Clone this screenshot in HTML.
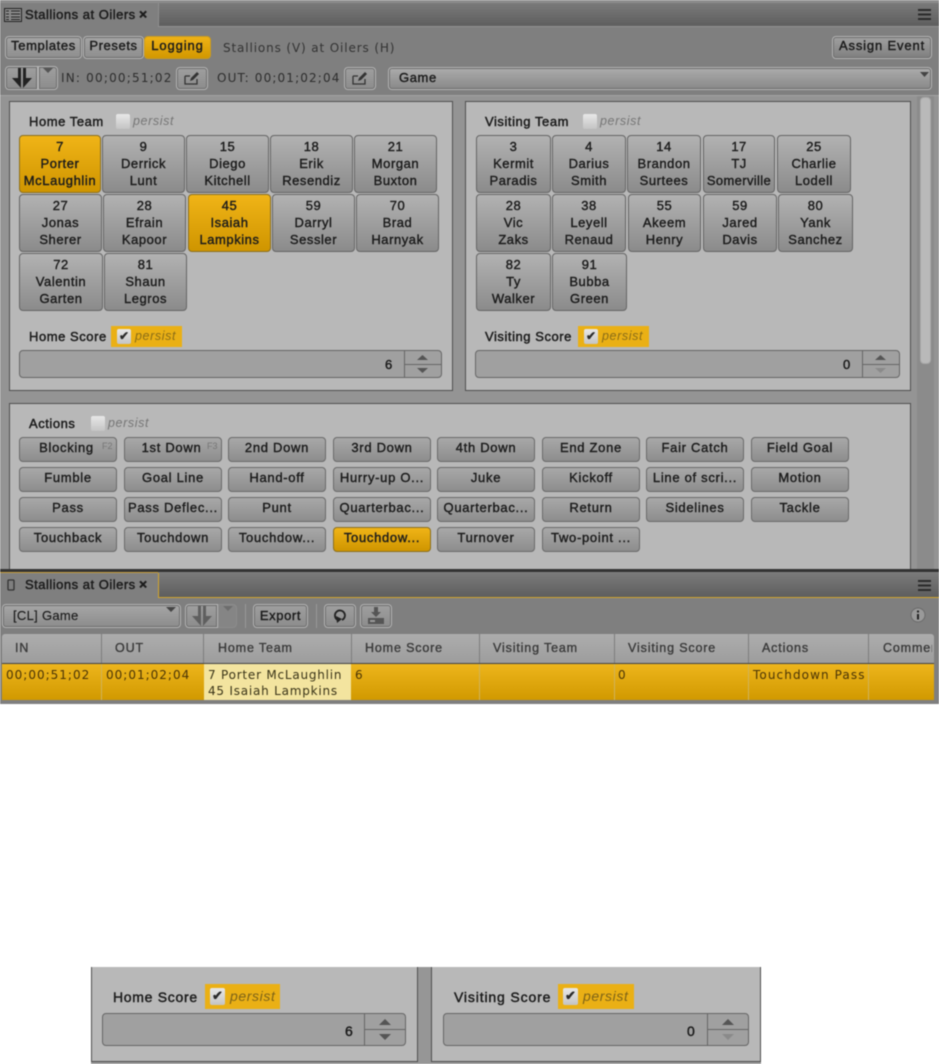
<!DOCTYPE html>
<html><head><meta charset="utf-8"><style>
html,body{margin:0;padding:0;background:#fff}
#p{position:relative;width:939px;height:1064px;overflow:hidden;background:#fff;filter:blur(.5px);font-family:"Liberation Sans",sans-serif;color:#1c1c1c;font-size:13px}
#p div,#p svg,#p span.a{position:absolute;box-sizing:border-box}
.b{background:linear-gradient(#b2b2b2,#8b8b8b);border:1px solid #656565;border-radius:4px;text-align:center;letter-spacing:.55px;line-height:17px;padding-top:2px;white-space:nowrap;-webkit-text-stroke:.4px #1c1c1c}
.c{background:linear-gradient(#a8a8a8,#8d8d8d);border:1px solid #6a6a6a;border-radius:4px;text-align:center;letter-spacing:.7px;line-height:20px;height:25px;width:98px;white-space:nowrap;-webkit-text-stroke:.4px #1c1c1c}
.b.g,.c.g{background:linear-gradient(#f0b417,#cf9500);border-color:#8b6f20}
.t{background:linear-gradient(#9f9f9f,#8c8c8c);border:1px solid #b5b5b5;outline:1px solid #6d6d6d;outline-offset:-2px;border-radius:4px;text-align:center;white-space:nowrap;letter-spacing:.6px;-webkit-text-stroke:.4px #1c1c1c}
.pn{background:#b8b8b8;border:1px solid #4f4f4f}
.l{white-space:nowrap;letter-spacing:.55px;font-size:13px;-webkit-text-stroke:.45px #1c1c1c}
.d{font-family:"DejaVu Sans",sans-serif;font-size:12px;white-space:nowrap;color:#2d2d2d;letter-spacing:1.2px}
.cb{width:14px;height:15px;background:linear-gradient(#e8e8e8,#c4c4c4);border-radius:2px}
.pe{font-style:italic;color:#767676;font-size:12.5px;white-space:nowrap;letter-spacing:.6px}
.gb{background:#eab015}
.spin{background:#a0a0a0;border:1px solid #666;border-radius:4px}
.sd{background:#666;width:1px}
.h{font-family:"Liberation Sans",sans-serif;font-size:12.5px;color:#3a3a3a;white-space:nowrap;letter-spacing:.85px;-webkit-text-stroke:.35px #3a3a3a;top:641px}
.hs{background:#7d7d7d;width:1px;top:634px;height:29px}
.rs{background:#d0b35a;width:1px;top:664px;height:36px}
.ck{font-size:12px;color:#2a2a2a;font-weight:bold;white-space:nowrap}
</style></head><body><div id="p">

<div style="left:0;top:0;width:939px;height:570px;background:#7f7f7f"></div>
<div style="left:0;top:0;width:939px;height:3px;background:#8c8c8c"></div>
<div style="left:158px;top:3px;width:781px;height:24px;background:linear-gradient(#7a7a7a,#5e5e5e);border-bottom:1px solid #929292;border-left:1px solid #8f8f8f"></div>
<div style="left:0;top:3px;width:158px;height:25px;background:#7f7f7f"></div>
<svg style="left:4px;top:8px" width="18" height="14" viewBox="0 0 18 14"><rect x=".5" y=".5" width="17" height="13" fill="#8a8a8a" stroke="#222"/><path d="M2 3h3M2 6h3M2 9h3M2 11.5h3M7 3h9M7 6h9M7 9h9M7 11.5h9" stroke="#222" fill="none"/></svg>
<div class="l" style="left:25px;top:7px;letter-spacing:.5px">Stallions at Oilers</div>
<div class="l" style="left:139px;top:6px;font-size:14px;font-weight:bold">×</div>
<svg style="left:917px;top:8px" width="15" height="13" viewBox="0 0 15 13"><path d="M1 2h13M1 6.500h13M1 11h13" stroke="#2b2b2b" stroke-width="2"/></svg>

<div class="t" style="left:5px;top:36px;width:77px;height:23px;line-height:18px;background:linear-gradient(#a4a4a4,#8e8e8e)">Templates</div>
<div class="t" style="left:83px;top:36px;width:61px;height:23px;line-height:18px;background:linear-gradient(#a4a4a4,#8e8e8e)">Presets</div>
<div class="t" style="left:144px;top:36px;width:67px;height:23px;line-height:18px;letter-spacing:.9px;background:linear-gradient(#efb215,#d29800);border-color:#c99b20;outline:none">Logging</div>
<div class="d" style="left:223px;top:41px;color:#333;letter-spacing:.87px">Stallions (V) at Oilers (H)</div>
<div class="t" style="left:832px;top:36px;width:100px;height:23px;line-height:18px;letter-spacing:.85px;background:linear-gradient(#a0a0a0,#7f7f7f)">Assign Event</div>

<div class="t" style="left:5px;top:66px;width:33px;height:24px;border-radius:4px 0 0 4px"></div>
<div class="t" style="left:38px;top:66px;width:20px;height:24px;border-radius:0 4px 4px 0"></div>
<svg style="left:11px;top:68px" width="22" height="20" viewBox="0 0 22 20"><path d="M7 0h3v20L1 10h6zM12 0h3v10h6L12 20z" fill="#222"/></svg>
<svg style="left:43px;top:68px" width="10" height="6" viewBox="0 0 10 6"><path d="M0 0h10L5 5z" fill="#555"/></svg>
<div class="d" style="left:61px;top:71px">IN: 00;00;51;02</div>
<div class="t" style="left:176px;top:67px;width:32px;height:23px"></div>
<svg style="left:184px;top:71px" width="16" height="14" viewBox="0 0 16 14"><path d="M1 5v8h12V8M1 5h5" fill="none" stroke="#333" stroke-width="1.300"/><path d="M6 10l1-3 6-6 2 2-6 6z" fill="#333"/></svg>
<div class="d" style="left:217px;top:71px;letter-spacing:1.14px">OUT: 00;01;02;04</div>
<div class="t" style="left:344px;top:67px;width:32px;height:23px"></div>
<svg style="left:352px;top:71px" width="16" height="14" viewBox="0 0 16 14"><path d="M1 5v8h12V8M1 5h5" fill="none" stroke="#333" stroke-width="1.300"/><path d="M6 10l1-3 6-6 2 2-6 6z" fill="#333"/></svg>
<div class="t" style="left:388px;top:67px;width:544px;height:23px;background:linear-gradient(#acacac,#888);text-align:left;padding-left:10px;line-height:20px">Game</div>
<svg style="left:920px;top:72px" width="9" height="6" viewBox="0 0 9 6"><path d="M0 0h9L4.500 5z" fill="#444"/></svg>

<div style="left:0;top:95px;width:939px;height:475px;background:#949494;border-top:1px solid #a3a3a3"></div>
<div style="left:917px;top:96px;width:17px;height:474px;background:#8b8b8b"></div>
<div style="left:920px;top:97px;width:11px;height:267px;background:#b9b9b9;border-radius:4px;border:1px solid #a8a8a8"></div>

<div class="pn" style="left:9px;top:101px;width:444px;height:290px"></div>
<div class="pn" style="left:465px;top:101px;width:446px;height:290px"></div>

<div class="l" style="left:29px;top:114px">Home Team</div>
<div class="cb" style="left:116px;top:114px"></div>
<div class="pe" style="left:133px;top:114px">persist</div>
<div class="l" style="left:485px;top:114px">Visiting Team</div>
<div class="cb" style="left:583px;top:114px"></div>
<div class="pe" style="left:600px;top:114px">persist</div>

<div class="b g" style="left:19px;top:135px;width:82px;height:58px;letter-spacing:.6px">7<br>Porter<br>McLaughlin</div>
<div class="b" style="left:102px;top:135px;width:83px;height:58px">9<br>Derrick<br>Lunt</div>
<div class="b" style="left:186px;top:135px;width:83px;height:58px">15<br>Diego<br>Kitchell</div>
<div class="b" style="left:270px;top:135px;width:83px;height:58px">18<br>Erik<br>Resendiz</div>
<div class="b" style="left:354px;top:135px;width:83px;height:58px">21<br>Morgan<br>Buxton</div>
<div class="b" style="left:19px;top:194px;width:83px;height:58px">27<br>Jonas<br>Sherer</div>
<div class="b" style="left:103px;top:194px;width:83px;height:58px">28<br>Efrain<br>Kapoor</div>
<div class="b g" style="left:188px;top:194px;width:83px;height:58px">45<br>Isaiah<br>Lampkins</div>
<div class="b" style="left:272px;top:194px;width:83px;height:58px">59<br>Darryl<br>Sessler</div>
<div class="b" style="left:356px;top:194px;width:83px;height:58px">70<br>Brad<br>Harnyak</div>
<div class="b" style="left:19px;top:253px;width:84px;height:58px">72<br>Valentin<br>Garten</div>
<div class="b" style="left:104px;top:253px;width:83px;height:58px">81<br>Shaun<br>Legros</div>

<div class="b" style="left:476px;top:135px;width:75px;height:58px">3<br>Kermit<br>Paradis</div>
<div class="b" style="left:552px;top:135px;width:74px;height:58px">4<br>Darius<br>Smith</div>
<div class="b" style="left:627px;top:135px;width:74px;height:58px">14<br>Brandon<br>Surtees</div>
<div class="b" style="left:703px;top:135px;width:72px;height:58px;letter-spacing:.35px">17<br>TJ<br>Somerville</div>
<div class="b" style="left:777px;top:135px;width:74px;height:58px">25<br>Charlie<br>Lodell</div>
<div class="b" style="left:476px;top:194px;width:75px;height:58px">28<br>Vic<br>Zaks</div>
<div class="b" style="left:552px;top:194px;width:74px;height:58px">38<br>Leyell<br>Renaud</div>
<div class="b" style="left:628px;top:194px;width:73px;height:58px">55<br>Akeem<br>Henry</div>
<div class="b" style="left:703px;top:194px;width:74px;height:58px">59<br>Jared<br>Davis</div>
<div class="b" style="left:778px;top:194px;width:75px;height:58px">80<br>Yank<br>Sanchez</div>
<div class="b" style="left:476px;top:253px;width:75px;height:58px">82<br>Ty<br>Walker</div>
<div class="b" style="left:552px;top:253px;width:75px;height:58px">91<br>Bubba<br>Green</div>

<div class="l" style="left:29px;top:329px">Home Score</div>
<div class="gb" style="left:111px;top:326px;width:71px;height:21px"></div>
<div class="cb" style="left:117px;top:329px"></div>
<div class="ck" style="left:119px;top:329px">✔</div>
<div class="pe" style="left:135px;top:329px;color:#8a6d18">persist</div>
<div class="spin" style="left:19px;top:350px;width:423px;height:28px"></div>
<div class="sd" style="left:404px;top:351px;height:26px"></div>
<div class="sd" style="left:405px;top:364px;height:1px;width:36px"></div>
<div class="l" style="left:385px;top:357px">6</div>
<svg style="left:417px;top:355px" width="11" height="6"><path d="M0 5h11L5.500 0z" fill="#555"/></svg>
<svg style="left:417px;top:368px" width="11" height="6"><path d="M0 0h11L5.500 5z" fill="#555"/></svg>

<div class="l" style="left:485px;top:329px">Visiting Score</div>
<div class="gb" style="left:578px;top:326px;width:71px;height:21px"></div>
<div class="cb" style="left:584px;top:329px"></div>
<div class="ck" style="left:586px;top:329px">✔</div>
<div class="pe" style="left:602px;top:329px;color:#8a6d18">persist</div>
<div class="spin" style="left:475px;top:350px;width:425px;height:28px"></div>
<div class="sd" style="left:862px;top:351px;height:26px"></div>
<div class="sd" style="left:863px;top:364px;height:1px;width:36px"></div>
<div class="l" style="left:843px;top:357px">0</div>
<svg style="left:875px;top:355px" width="11" height="6"><path d="M0 5h11L5.500 0z" fill="#555"/></svg>
<svg style="left:875px;top:368px" width="11" height="6"><path d="M0 0h11L5.500 5z" fill="#8a8a8a"/></svg>

<div class="pn" style="left:9px;top:403px;width:902px;height:170px"></div>
<div class="l" style="left:29px;top:416px">Actions</div>
<div class="cb" style="left:91px;top:416px"></div>
<div class="pe" style="left:108px;top:416px">persist</div>

<div class="c" style="left:19px;top:437px;padding-right:3px">Blocking</div>
<div class="pe" style="left:102px;top:441px;font-size:9px;font-style:normal;letter-spacing:0">F2</div>
<div class="c" style="left:124px;top:437px;padding-right:3px">1st Down</div>
<div class="pe" style="left:207px;top:441px;font-size:9px;font-style:normal;letter-spacing:0">F3</div>
<div class="c" style="left:228px;top:437px">2nd Down</div>
<div class="c" style="left:333px;top:437px">3rd Down</div>
<div class="c" style="left:437px;top:437px">4th Down</div>
<div class="c" style="left:542px;top:437px">End Zone</div>
<div class="c" style="left:646px;top:437px">Fair Catch</div>
<div class="c" style="left:751px;top:437px">Field Goal</div>

<div class="c" style="left:19px;top:467px">Fumble</div>
<div class="c" style="left:124px;top:467px">Goal Line</div>
<div class="c" style="left:228px;top:467px">Hand-off</div>
<div class="c" style="left:333px;top:467px">Hurry-up O...</div>
<div class="c" style="left:437px;top:467px">Juke</div>
<div class="c" style="left:542px;top:467px">Kickoff</div>
<div class="c" style="left:646px;top:467px">Line of scri...</div>
<div class="c" style="left:751px;top:467px">Motion</div>

<div class="c" style="left:19px;top:497px">Pass</div>
<div class="c" style="left:124px;top:497px">Pass Deflec...</div>
<div class="c" style="left:228px;top:497px">Punt</div>
<div class="c" style="left:333px;top:497px">Quarterbac...</div>
<div class="c" style="left:437px;top:497px">Quarterbac...</div>
<div class="c" style="left:542px;top:497px">Return</div>
<div class="c" style="left:646px;top:497px">Sidelines</div>
<div class="c" style="left:751px;top:497px">Tackle</div>

<div class="c" style="left:19px;top:527px">Touchback</div>
<div class="c" style="left:124px;top:527px">Touchdown</div>
<div class="c" style="left:228px;top:527px">Touchdow...</div>
<div class="c g" style="left:333px;top:527px">Touchdow...</div>
<div class="c" style="left:437px;top:527px">Turnover</div>
<div class="c" style="left:542px;top:527px">Two-point ...</div>

<div style="left:0;top:569px;width:939px;height:3px;background:#333"></div>
<div style="left:0;top:572px;width:939px;height:132px;background:#7f7f7f"></div>
<div style="left:158px;top:573px;width:781px;height:25px;background:linear-gradient(#7a7a7a,#5e5e5e);border-bottom:1px solid #d3a52c;border-left:1px solid #d3a52c"></div>
<div style="left:0;top:572px;width:158px;height:27px;border-top:1px solid #c9a040;background:#7f7f7f"></div>
<svg style="left:7px;top:579px" width="8" height="12"><rect x="1" y="1" width="6" height="10" rx="1" fill="none" stroke="#333" stroke-width="1.300"/></svg>
<div class="l" style="left:25px;top:577px;letter-spacing:.5px">Stallions at Oilers</div>
<div class="l" style="left:139px;top:576px;font-size:14px;font-weight:bold">×</div>
<svg style="left:917px;top:579px" width="15" height="13" viewBox="0 0 15 13"><path d="M1 2h13M1 6.500h13M1 11h13" stroke="#2b2b2b" stroke-width="2"/></svg>

<div class="t" style="left:2px;top:604px;width:179px;height:24px;text-align:left;padding-left:10px;line-height:21px;letter-spacing:.3px;-webkit-text-stroke:.15px #222;background:linear-gradient(#a6a6a6,#8c8c8c)">[CL] Game</div>
<svg style="left:166px;top:607px" width="10" height="6"><path d="M0 0h10L5 5z" fill="#444"/></svg>
<div class="t" style="left:185px;top:604px;width:33px;height:24px;border-radius:4px 0 0 4px"></div>
<div class="t" style="left:218px;top:604px;width:19px;height:24px;border-radius:0 4px 4px 0;background:#858585;border-color:#8c8c8c;outline:none"></div>
<svg style="left:191px;top:606px" width="22" height="20" viewBox="0 0 22 20"><path d="M7 0h3v20L1 10h6zM12 0h3v10h6L12 20z" fill="#5f5f5f"/></svg>
<svg style="left:223px;top:606px" width="10" height="6"><path d="M0 0h10L5 5z" fill="#6d6d6d"/></svg>
<div style="left:245px;top:604px;width:1px;height:24px;background:#999"></div>
<div class="t" style="left:253px;top:604px;width:55px;height:24px;line-height:21px">Export</div>
<div style="left:316px;top:604px;width:1px;height:24px;background:#999"></div>
<div class="t" style="left:324px;top:604px;width:32px;height:24px"></div>
<svg style="left:332px;top:607px" width="16" height="18" viewBox="0 0 16 18"><path d="M5 12.500a5 5 0 1 1 5 .5" fill="none" stroke="#222" stroke-width="1.800"/><path d="M4 9l1 7 5-4z" fill="#222"/></svg>
<div class="t" style="left:360px;top:604px;width:32px;height:24px"></div>
<svg style="left:367px;top:607px" width="18" height="18" viewBox="0 0 18 18"><path d="M7 0h4v5h3l-5 5-5-5h3z" fill="#555"/><rect x="1" y="11" width="16" height="6" fill="#555"/><rect x="3" y="13" width="5" height="2" fill="#9a9a9a"/></svg>
<svg style="left:910px;top:607px" width="16" height="16" viewBox="0 0 16 16"><circle cx="8" cy="8" r="7" fill="#9a9a9a" stroke="#6a6a6a"/><path d="M8 3.500v2M8 7v5.500" stroke="#222" stroke-width="2"/></svg>

<div style="left:2px;top:634px;width:932px;height:30px;background:linear-gradient(#adadad,#9d9d9d);border-bottom:1px solid #444;border-radius:3px 3px 0 0"></div>
<div class="hs" style="left:101px"></div><div class="hs" style="left:203px"></div><div class="hs" style="left:351px"></div><div class="hs" style="left:479px"></div><div class="hs" style="left:614px"></div><div class="hs" style="left:748px"></div><div class="hs" style="left:868px"></div>
<div class="h" style="left:15px">IN</div>
<div class="h" style="left:115px">OUT</div>
<div class="h" style="left:218px">Home Team</div>
<div class="h" style="left:365px">Home Score</div>
<div class="h" style="left:493px">Visiting Team</div>
<div class="h" style="left:628px">Visiting Score</div>
<div class="h" style="left:762px">Actions</div>
<div class="h" style="left:883px;width:49px;overflow:hidden">Comments</div>

<div style="left:2px;top:664px;width:932px;height:36px;background:linear-gradient(#edb51c,#d19900)"></div>
<div style="left:204px;top:664px;width:147px;height:36px;background:#f3e49f"></div>
<div class="rs" style="left:101px"></div><div class="rs" style="left:479px"></div><div class="rs" style="left:614px"></div><div class="rs" style="left:748px"></div><div class="rs" style="left:868px"></div>
<div class="d" style="left:6px;top:668px;color:#4a3406;letter-spacing:1px">00;00;51;02</div>
<div class="d" style="left:106px;top:668px;color:#4a3406;letter-spacing:1px">00;01;02;04</div>
<div class="d" style="left:208px;top:668px;color:#3a3418;letter-spacing:.78px">7 Porter McLaughlin</div>
<div class="d" style="left:208px;top:684px;color:#3a3418;letter-spacing:.78px">45 Isaiah Lampkins</div>
<div class="d" style="left:355px;top:668px;color:#4a3406">6</div>
<div class="d" style="left:618px;top:668px;color:#4a3406">0</div>
<div class="d" style="left:753px;top:668px;color:#4a3406;letter-spacing:1.1px">Touchdown Pass</div>

<div class="pn" style="left:91px;top:960px;width:327px;height:102px"></div>
<div class="pn" style="left:431px;top:960px;width:330px;height:102px"></div>
<div style="left:418px;top:960px;width:13px;height:104px;background:#969696"></div>
<div style="left:91px;top:1062px;width:670px;height:2px;background:#969696"></div>
<div style="left:88px;top:950px;width:680px;height:17px;background:#fff"></div>
<div class="l" style="left:113px;top:989px;font-size:14px;letter-spacing:.7px">Home Score</div>
<div class="gb" style="left:205px;top:984px;width:75px;height:25px"></div>
<div class="cb" style="left:210px;top:988px;height:17px;width:15px"></div>
<div class="ck" style="left:212px;top:988px;font-size:13px">✔</div>
<div class="pe" style="left:230px;top:988px;color:#7d6318;font-size:14px">persist</div>
<div class="spin" style="left:102px;top:1013px;width:304px;height:33px"></div>
<div class="sd" style="left:364px;top:1014px;height:31px"></div>
<div class="sd" style="left:365px;top:1029px;height:1px;width:40px"></div>
<div class="l" style="left:345px;top:1023px;font-size:14px">6</div>
<svg style="left:379px;top:1019px" width="12" height="7"><path d="M0 6h12L6 0z" fill="#555"/></svg>
<svg style="left:379px;top:1034px" width="12" height="7"><path d="M0 0h12L6 6z" fill="#555"/></svg>

<div class="l" style="left:454px;top:989px;font-size:14px;letter-spacing:.85px">Visiting Score</div>
<div class="gb" style="left:558px;top:984px;width:76px;height:25px"></div>
<div class="cb" style="left:563px;top:988px;height:17px;width:15px"></div>
<div class="ck" style="left:565px;top:988px;font-size:13px">✔</div>
<div class="pe" style="left:583px;top:988px;color:#7d6318;font-size:14px">persist</div>
<div class="spin" style="left:443px;top:1013px;width:306px;height:33px"></div>
<div class="sd" style="left:707px;top:1014px;height:31px"></div>
<div class="sd" style="left:708px;top:1029px;height:1px;width:40px"></div>
<div class="l" style="left:687px;top:1023px;font-size:14px">0</div>
<svg style="left:722px;top:1019px" width="12" height="7"><path d="M0 6h12L6 0z" fill="#555"/></svg>
<svg style="left:722px;top:1034px" width="12" height="7"><path d="M0 0h12L6 6z" fill="#8a8a8a"/></svg>

</div></body></html>
